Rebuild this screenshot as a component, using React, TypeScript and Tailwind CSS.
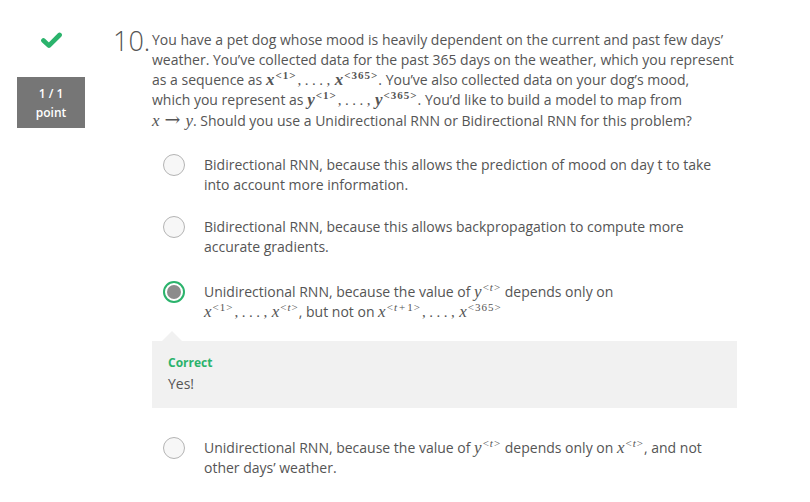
const sans = { fontFamily: '"Open Sans", "Noto Sans", sans-serif' };
const serif = { fontFamily: '"Liberation Serif", "DejaVu Serif", serif' };

function V({ children, bold = false }: { children: React.ReactNode; bold?: boolean }) {
  return (
    <span className={`italic text-[17px] leading-none ${bold ? "font-bold" : ""}`} style={serif}>
      {children}
    </span>
  );
}

function Sup({ children, bold = false }: { children: React.ReactNode; bold?: boolean }) {
  return (
    <sup
      className={`not-italic text-[11px] tracking-[1px] -top-[6px] ml-[1px] ${bold ? "font-bold" : ""}`}
      style={serif}
    >
      {children}
    </sup>
  );
}

function Dots() {
  return (
    <span className="mx-[1px] text-[15px] leading-none tracking-[3.5px]" style={serif}>
      ,...,
    </span>
  );
}

function Seq({ v, a, b, bold = false }: { v: string; a: React.ReactNode; b: React.ReactNode; bold?: boolean }) {
  return (
    <span className="whitespace-nowrap">
      <V bold={bold}>{v}</V>
      <Sup bold={bold}>&lt;{a}&gt;</Sup>
      <Dots />
      <V bold={bold}>{v}</V>
      <Sup bold={bold}>&lt;{b}&gt;</Sup>
    </span>
  );
}

function Vt({ v }: { v: string }) {
  return (
    <span className="whitespace-nowrap">
      <V>{v}</V>
      <Sup>
        &lt;<i>t</i>&gt;
      </Sup>
    </span>
  );
}

function Radio({ selected = false }: { selected?: boolean }) {
  if (selected) {
    return (
      <span className="flex h-[22px] w-[22px] shrink-0 items-center justify-center rounded-full border-[2.5px] border-[#2bb36c] bg-white">
        <span className="h-[14px] w-[14px] rounded-full bg-[#8c8c8c]" />
      </span>
    );
  }
  return <span className="h-[22px] w-[22px] shrink-0 rounded-full border border-[#b4b4b4] bg-[#f7f7f7]" />;
}

function Option({ selected, children }: { selected?: boolean; children: React.ReactNode }) {
  return (
    <div className="flex items-start pl-[11px]">
      <Radio selected={selected} />
      <div className="ml-[19px] mt-[1px] text-[14px] leading-[20px] text-[#555]">{children}</div>
    </div>
  );
}

export default function App() {
  return (
    <div className="h-[502px] w-[810px] bg-white" style={sans}>
      <div className="flex pt-[30px]">
        <div className="flex w-[113px] flex-col items-start">
          <svg viewBox="0 0 26 20" className="ml-[39px] mt-[2px] h-[17px] w-[25px]">
            <path
              d="M3.5 10 L10 16 L22.5 3.5"
              fill="none"
              stroke="#2bb36c"
              strokeWidth="5.5"
              strokeLinejoin="round"
              strokeLinecap="round"
            />
          </svg>
          <div className="ml-[17px] mt-[28px] flex h-[51px] w-[68px] flex-col items-center justify-center bg-[#767676] text-[12px] font-semibold leading-[19px] text-white">
            <span>1 / 1</span>
            <span>point</span>
          </div>
        </div>
        <div className="w-[39px] text-[27px] font-light leading-[22px] text-[#555]">10.</div>
        <div className="w-[620px]">
          <p className="text-[14px] leading-[20px] text-[#555]">
            You have a pet dog whose mood is heavily dependent on the current and past few days’
            <br />
            weather. You’ve collected data for the past 365 days on the weather, which you represent
            <br />
            as a sequence as <Seq v="x" a="1" b="365" bold />. You’ve also collected data on your dog’s mood,
            <br />
            which you represent as <Seq v="y" a="1" b="365" bold />. You’d like to build a model to map from
            <br />
            <span className="whitespace-nowrap">
              <V>x</V>
              <span className="mx-[5px] text-[19px] leading-none" style={{ fontFamily: '"DejaVu Serif", serif' }}>
                →
              </span>
              <V>y</V>
            </span>
            . Should you use a Unidirectional RNN or Bidirectional RNN for this problem?
          </p>

          <div className="flex flex-col">
            <div className="mt-[23px]">
              <Option>
                Bidirectional RNN, because this allows the prediction of mood on day t to take
                <br />
                into account more information.
              </Option>
            </div>
            <div className="mt-[21px]">
              <Option>
                Bidirectional RNN, because this allows backpropagation to compute more
                <br />
                accurate gradients.
              </Option>
            </div>
            <div className="mt-[24px]">
              <Option selected>
                Unidirectional RNN, because the value of <Vt v="y" /> depends only on
                <br />
                <Seq v="x" a="1" b={<i>t</i>} />, but not on{" "}
                <Seq
                  v="x"
                  a={
                    <>
                      <i>t</i>
                      <span className="mx-[1px]">+</span>1
                    </>
                  }
                  b="365"
                />
              </Option>
            </div>

            <div className="relative mt-[19px] h-[67px] w-[585px] bg-[#f1f1f1] px-[16px] pt-[13px]">
              <span className="absolute -top-[10px] left-[10px] h-0 w-0 border-x-[10px] border-b-[10px] border-x-transparent border-b-[#f1f1f1]" />
              <div className="text-[12px] font-bold leading-[18px] text-[#2bb36c]">Correct</div>
              <div className="mt-[2px] text-[14px] leading-[20px] text-[#555]">Yes!</div>
            </div>

            <div className="mt-[29px]">
              <Option>
                Unidirectional RNN, because the value of <Vt v="y" /> depends only on <Vt v="x" />, and not
                <br />
                other days’ weather.
              </Option>
            </div>
          </div>
        </div>
      </div>
    </div>
  );
}
